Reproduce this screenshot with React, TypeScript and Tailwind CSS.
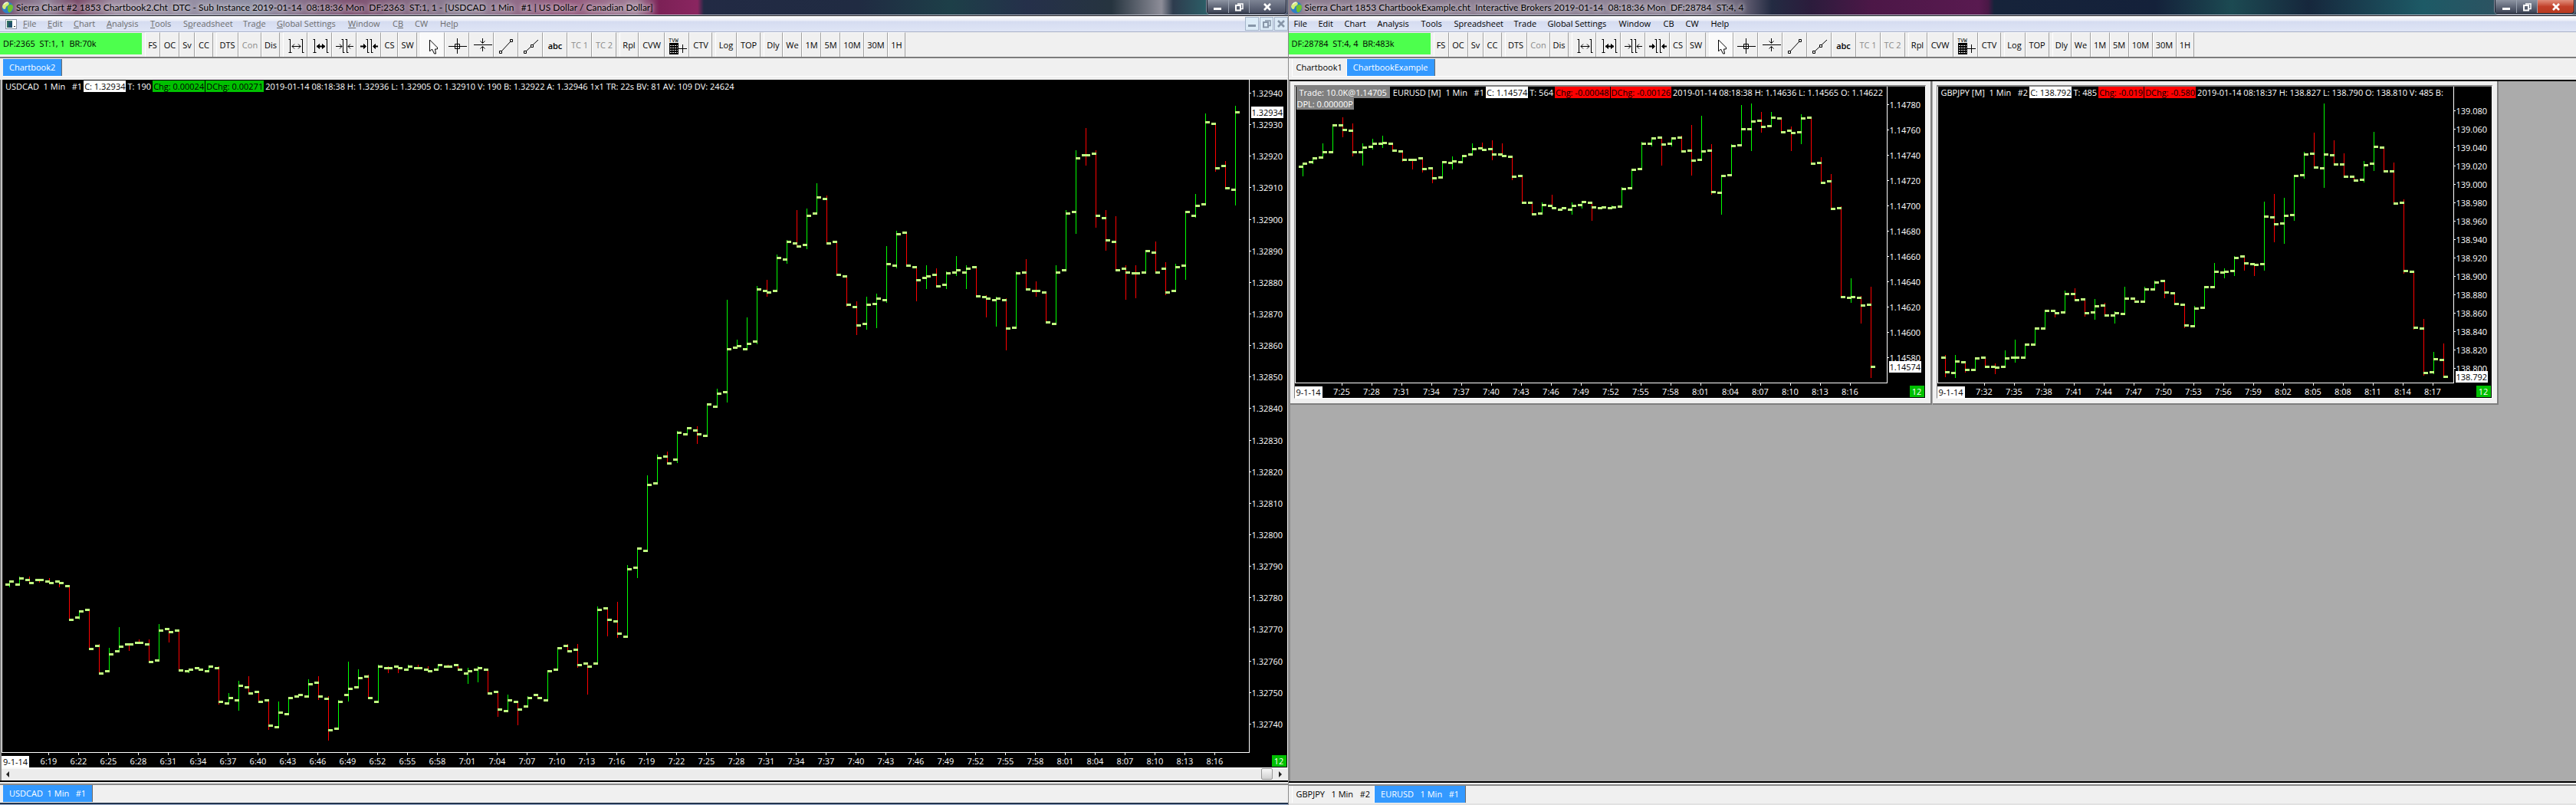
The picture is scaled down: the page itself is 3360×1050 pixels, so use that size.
import React from 'react';

// [open, close, high, low], high and low left out when the bar has no wick there
type Bar = [number, number, number?, number?];

interface Segment {
  origin: number;
  scale: number;
  bars: Bar[];
}

interface ChartProps {
  header: React.ReactNode;
  segments: Segment[];
  prices: string[];
  pricePadding: string;
  last: string;
  lastTop: number;
  times: string[];
}

const USDCAD: Segment[] = [
  {
    origin: 617,
    scale: 1 / 3,
    bars: [
      [124, 112, 112, 136], [124, 100, 94, 124], [106, 118, 94], [106, 106, 106, 116], [112, 118, 100], [112, 118, 112, 136],
      [130, 262], [253, 229, 229, 262], [223, 374], [364, 472, 358], [463, 397, 373], [385, 365, 292], [358, 358, 358, 385],
      [352, 352, 340], [358, 427, 340], [421, 304, 280], [298, 310, 298, 352], [304, 458], [463, 457, 457, 470], [451, 457],
      [463, 445], [451, 583, 445, 595], [589, 568, 550], [577, 520, 502, 618], [526, 550, 484], [544, 583], [577, 676, 577, 693],
      [682, 625, 583], [631, 568], [562, 556], [562, 514, 496], [508, 562, 484, 575], [571, 694, 562, 735], [688, 583, 577],
      [556, 532, 427, 582], [526, 490, 457], [484, 568, 478], [583, 445, 439], [451, 451, 445, 470], [445, 451, 445, 470],
      [457, 445, 439], [451, 451, 438], [457, 463, 445], [457, 439], [445, 445, 439], [439, 457], [472, 463, 451, 514],
      [457, 451, 445, 508], [457, 550], [544, 613, 544, 642], [619, 577, 556], [583, 613, 583, 675], [601, 568, 562],
      [556, 568], [577, 463], [457, 373], [364, 385, 358], [379, 439, 358, 450], [433, 445, 433, 555], [433, 223, 211],
      [217, 262, 217, 327], [268, 316, 193, 333], [328, 64, 48], [58, -17, -17, 99], [-10, -267, -302],
    ],
  },
  {
    origin: 57,
    scale: 0.3444,
    bars: [
      [1363, 1267, 1254], [1261, 1287, 1243], [1273, 1171, 1163, 1286], [1177, 1154], [1160, 1177, 1147, 1214], [1183, 1064],
      [1070, 1023, 1005], [1017, 855, 668, 1057], [849, 843, 819], [855, 832, 735], [826, 628, 616, 836], [634, 640, 592, 656],
      [634, 509, 497], [515, 448, 441, 531], [454, 466, 328], [460, 347, 322, 476], [341, 280, 226], [286, 454, 273],
      [448, 573], [579, 686, 579, 694], [695, 765, 674, 801], [759, 686, 656, 781], [681, 663, 645, 775], [669, 532, 465, 679],
      [538, 419, 407, 549], [413, 538], [544, 593, 544, 674], [585, 579, 537, 627], [573, 617, 549], [611, 567, 560, 627],
      [562, 556, 502, 578], [562, 550, 537, 628], [544, 652], [657, 663, 650, 735], [669, 663, 656, 769], [669, 776, 662, 859],
      [771, 567, 560], [562, 628, 514], [634, 634, 598, 656], [640, 753], [759, 562, 537], [556, 341, 328],
      [335, 132, 102, 418], [120, 120, 17, 160], [114, 347, 102, 395], [358, 442, 328, 482], [448, 556, 351],
      [550, 562, 537, 668], [567, 567, 537, 662], [562, 483], [489, 562, 447], [550, 640, 526, 650], [634, 544, 531],
      [538, 335, 335, 592], [347, 312, 267, 357], [306, -5, -38], [1, 167, 1, 182], [161, 245, 142], [251, -43, -68, 310],
    ],
  },
];

const EURUSD: Segment[] = [
  {
    origin: -12,
    scale: 1 / 3,
    bars: [
      [349, 335, 335, 387], [331, 316, 316, 339], [313, 290, 258], [290, 187], [187, 205, 156, 234], [208, 290, 180, 308],
      [290, 274, 258, 345], [271, 259, 240, 281], [259, 256, 228, 276], [259, 284], [287, 322, 287, 330], [320, 320, 320, 360],
      [316, 358, 316, 371], [355, 392, 355, 414], [389, 331], [334, 328, 309, 360], [331, 307], [301, 280, 258],
      [277, 281, 255, 287], [278, 301, 246, 323], [301, 307, 258], [310, 388, 310, 401], [385, 490], [488, 535],
      [532, 499, 489], [502, 511, 459], [515, 511], [515, 502, 489, 537], [499, 487, 487, 512], [490, 508, 490, 560],
      [511, 508], [511, 508, 501], [505, 436, 429], [433, 361], [358, 259, 252], [259, 238, 238, 270], [235, 262, 235, 345],
      [259, 238, 238, 269], [235, 289, 228], [286, 325, 186, 383], [322, 289, 150], [286, 448, 261, 459], [451, 385, 385, 537],
      [382, 268, 262], [265, 202, 108], [202, 172, 102, 288], [169, 193, 135, 216], [190, 157, 135], [160, 214],
      [208, 217, 192, 288], [214, 160, 144, 261], [157, 337], [334, 412, 312], [406, 514, 378], [511, 859, 504],
      [862, 859, 786, 882], [862, 892, 856, 963], [889, 1132, 819, 1175],
    ],
  },
];

const GBPJPY: Segment[] = [
  {
    origin: -12,
    scale: 1 / 3,
    bars: [
      [1096, 1153, 1087, 1173], [1156, 1111, 1087, 1176], [1114, 1144, 1114, 1155], [1144, 1099], [1096, 1132],
      [1132, 1135, 1119, 1161], [1132, 1099, 1068], [1096, 1095, 1026, 1116], [1096, 1045], [1045, 982], [982, 913],
      [913, 922, 913, 939], [919, 847, 834], [847, 871, 825], [868, 922, 868, 936], [919, 895, 867, 948], [892, 931, 882],
      [931, 922, 915, 963], [925, 865, 819], [865, 877], [877, 829, 819], [829, 802, 795], [796, 841, 796, 864], [844, 886],
      [889, 970, 889, 981], [973, 904, 894], [901, 820], [820, 760, 726], [763, 760, 747, 786], [757, 706, 699, 777],
      [700, 727, 700, 756], [730, 733, 730, 777], [730, 544, 486, 756], [547, 574, 456, 645], [571, 541, 471, 651],
      [538, 385, 385, 561], [382, 301, 291, 396], [298, 352, 216], [355, 301, 102, 432], [304, 340, 246], [340, 388, 297],
      [388, 403], [400, 343, 327, 411], [337, 271, 213, 366], [274, 367], [367, 493, 333], [490, 757, 477, 768],
      [760, 979, 760, 987], [982, 1156, 945, 1167], [1153, 1102, 1074, 1161], [1105, 1171, 1041],
    ],
  },
];

const range = (from: number, step: number, count: number, digits: number) =>
  Array.from({ length: count }, (_, i) => (from - i * step).toFixed(digits));

const timesFrom = (hour: number, minute: number, count: number) =>
  Array.from({ length: count }, (_, i) => {
    const total = hour * 60 + minute + i * 3;
    return `${Math.floor(total / 60)}:${String(total % 60).padStart(2, '0')}`;
  });

const Bars: React.FC<{ segments: Segment[] }> = ({ segments }) => {
  const bars = segments.flatMap(({ origin, scale, bars }) =>
    bars.map(([open, close, high = open, low = open]) => ({
      up: close < open,
      open: Math.round(origin + open * scale),
      close: Math.round(origin + close * scale),
      high: Math.round(origin + Math.min(open, close, high) * scale),
      low: Math.round(origin + Math.max(open, close, low) * scale),
    }))
  );
  return (
    <svg className="absolute inset-0 h-full w-full" shapeRendering="crispEdges">
      {bars.map((b, i) => (
        <rect key={i} x={9 + i * 13} y={b.high} width={1} height={Math.max(1, b.low - b.high)} fill={b.up ? '#00ff00' : '#ff0000'} />
      ))}
      {bars.map((b, i) => (
        <g key={i} fill="#c0ff80">
          <rect x={4 + i * 13} y={b.open - 1} width={6} height={3} />
          <rect x={9 + i * 13} y={b.close - 1} width={6} height={3} />
        </g>
      ))}
    </svg>
  );
};

const Chart: React.FC<ChartProps> = ({ header, segments, prices, pricePadding, last, lastTop, times }) => (
  <div className="flex min-h-0 flex-1 flex-col bg-black text-white">
    <div className="flex min-h-0 flex-1">
      <div className="relative min-w-0 flex-1 overflow-hidden border-r border-b border-l border-white">
        <Bars segments={segments} />
        {header}
      </div>
      <div className={`relative flex w-[49px] shrink-0 flex-col justify-between ${pricePadding}`}>
        {prices.map((p) => (
          <div key={p} className="flex h-[15px] items-center gap-px leading-[15px]">
            <span className="h-px w-[2px] bg-white"></span>
            {p}
          </div>
        ))}
        <div className="absolute left-[2px] bg-white px-px leading-[15px] text-black" style={{ top: lastTop }}>{last}</div>
      </div>
    </div>
    <div className="flex h-[19px] shrink-0">
      <span className="mt-1 mr-[6px] h-[15px] w-9 shrink-0 bg-white text-center leading-[15px] text-black">9-1-14</span>
      {times.map((t) => (
        <div key={t} className="flex w-[39px] shrink-0 flex-col items-center">
          <span className="h-[3px] w-px bg-white"></span>
          <span className="leading-[15px]">{t}</span>
        </div>
      ))}
      <span className="mt-[3px] mr-px ml-auto h-[15px] w-[19px] shrink-0 bg-[#00c000] text-center leading-[15px]">12</span>
    </div>
  </div>
);

interface HeaderLineProps {
  symbol: string;
  close: string;
  trades: string;
  change: string;
  dayChange: string;
  rest: string;
  down?: boolean;
}

const HeaderLine: React.FC<HeaderLineProps> = ({ symbol, close, trades, change, dayChange, rest, down }) => (
  <div className="flex h-[15px] leading-[15px] whitespace-pre">
    <span className="pr-[2px] pl-[4px]">{symbol}</span>
    <span className="bg-white px-px text-black">{close}</span>
    <span className="px-[2px]">{trades}</span>
    <span className={`mr-px px-px text-black ${down ? 'bg-[#ff0000]' : 'bg-[#00c000]'}`}>{change}</span>
    <span className={`px-px text-black ${down ? 'bg-[#ff0000]' : 'bg-[#00c000]'}`}>{dayChange}</span>
    <span className="pl-[2px]">{rest}</span>
  </div>
);

const Globe = () => (
  <svg className="h-4 w-4 shrink-0" viewBox="0 0 16 16">
    <circle cx="8" cy="8" r="7.5" fill="#2f7fc4" />
    <path d="M1 6C2 2 6 0 9 1c2 2 0 4-2 5s-1 4-3 4-3-2-3-4z" fill="#d8ec7a" />
    <path d="M9 5c3-2 6-1 6 2s-2 6-4 7-3-2-3-4-1-3 1-5z" fill="#6fc02c" />
    <path d="M3 4c1-2 3-3 5-3" stroke="#fff" strokeWidth="1.4" fill="none" opacity=".7" />
  </svg>
);

const MinIcon = ({ color }: { color: string }) => (
  <svg className="h-3 w-3" viewBox="0 0 12 12"><rect x="1" y="7" width="10" height="3" fill={color} /></svg>
);
const RestoreIcon = ({ color }: { color: string }) => (
  <svg className="h-3 w-3" viewBox="0 0 12 12" fill="none" stroke={color} strokeWidth="2">
    <path d="M4 2h7v6.500H9" strokeWidth="1.500" />
    <rect x="2" y="4" width="6" height="6.500" />
  </svg>
);
const CloseIcon = ({ color }: { color: string }) => (
  <svg className="h-3 w-3" viewBox="0 0 12 12" stroke={color} strokeWidth="2.600"><path d="M2 2l8 8M10 2l-8 8" /></svg>
);

const TitleBar: React.FC<{ title: string; active?: boolean }> = ({ title, active }) => (
  <header
    className={`flex h-[21px] shrink-0 items-start overflow-hidden border-b border-[#15161c] pl-[2px] shadow-[inset_0_-1px_0_#b9bcc8] ${
      active
        ? 'bg-[linear-gradient(90deg,#8d7c90_0,#8d8396_540px,#6a6478_590px,#232b42_630px,#2b1c3c_680px,#4c1747_760px,#591a50_900px,#4a1846_912px,#16233a_920px,#14213a_1130px,#1c4a52_1230px,#16273c_1330px,#1d5a66_1480px,#3d4b5c_1679px)]'
        : 'bg-[linear-gradient(90deg,#75506d_0,#93869c_60px,#7a4a68_100px,#9c8ba0_150px,#8f90a4_330px,#7e5070_460px,#8d8296_600px,#94587c_740px,#a08098_830px,#7c2156_860px,#8a2560_910px,#222a44_918px,#202b42_1120px,#1d3f48_1240px,#25304a_1340px,#26343f_1450px,#8d8d98_1515px,#2e3c4e_1530px,#2b6b70_1590px,#46506a_1679px)]'
    }`}
  >
    <div className="flex items-center pt-[2px]">
      <Globe />
      <h1 className="ml-[3px] font-['Lato','Open_Sans',sans-serif] text-xs leading-[16px] whitespace-pre text-black [text-shadow:0_0_8px_#fffc,0_0_5px_#fffc]">{title}</h1>
    </div>
    <div className="mr-[2px] ml-auto flex h-[18px] rounded-b border border-t-0 border-[#1c2230] shadow-[0_0_0_1px_#8a90a0]">
      <button aria-label="Minimize" className="flex w-[28px] items-center justify-center border-r border-[#9aa2b0] bg-linear-to-b from-[#8d94a2] to-[#3b4254]"><MinIcon color="#fff" /></button>
      <button aria-label="Restore" className="flex w-[27px] items-center justify-center border-r border-[#9aa2b0] bg-linear-to-b from-[#8d94a2] to-[#3b4254]"><RestoreIcon color="#fff" /></button>
      <button
        aria-label="Close"
        className={`flex w-[47px] items-center justify-center rounded-br bg-linear-to-b ${active ? 'from-[#e08e7c] via-[#c2402a] to-[#b83a20]' : 'from-[#7d8494] to-[#4a5064]'}`}
      >
        <CloseIcon color="#fff" />
      </button>
    </div>
  </header>
);

const menus = [
  { label: 'File', key: 0, width: 'w-[32px]' },
  { label: 'Edit', key: 0, width: 'w-[34px]' },
  { label: 'Chart', key: 0, width: 'w-[43px]' },
  { label: 'Analysis', key: 0, width: 'w-[57px]' },
  { label: 'Tools', key: 0, width: 'w-[43px]' },
  { label: 'Spreadsheet', key: 1, width: 'w-[78px]' },
  { label: 'Trade', key: 3, width: 'w-[44px]' },
  { label: 'Global Settings', key: 0, width: 'w-[93px]' },
  { label: 'Window', key: 0, width: 'w-[58px]' },
  { label: 'CB', key: 1, width: 'w-[29px]' },
  { label: 'CW', key: -1, width: 'w-[33px]' },
  { label: 'Help', key: 2, width: 'w-[40px]' },
];

const mdiButton = 'flex h-[18px] w-[18px] items-center justify-center border border-[#a3b4c8] bg-[#dcebf7]';

const MenuBar: React.FC<{ child?: boolean }> = ({ child }) => (
  <nav className={`flex h-[21px] shrink-0 items-center border-b border-[#a9b1c8] bg-[linear-gradient(#fff_0,#e9ecf7_30%,#d5dcf0_35%,#dfe5f6_100%)] pl-[7px] ${child ? 'text-[#6d6d6d]' : 'text-black'}`}>
    {child && (
      <svg className="mr-[8px] h-[13px] w-[15px]" viewBox="0 0 15 13">
        <rect x=".5" y=".5" width="14" height="12" fill="#fff" stroke="#8a94a4" />
        <rect x="2" y="2" width="7" height="9" fill="#2f6f62" />
        <rect x="4" y="4" width="5" height="7" fill="#22506e" />
        <path d="M11 9.500h2" stroke="#333" />
      </svg>
    )}
    {menus.map((m) => (
      <button key={m.label} className={`${m.width} text-left leading-[16px] whitespace-nowrap`}>
        {child && m.key >= 0 ? (
          <>
            {m.label.slice(0, m.key)}
            <u>{m.label[m.key]}</u>
            {m.label.slice(m.key + 1)}
          </>
        ) : (
          m.label
        )}
      </button>
    ))}
    {child && (
      <div className="ml-auto flex gap-px">
        <button aria-label="Minimize chart" className={mdiButton}><MinIcon color="#8796a8" /></button>
        <button aria-label="Restore chart" className={mdiButton}><RestoreIcon color="#8796a8" /></button>
        <button aria-label="Close chart" className={mdiButton}><CloseIcon color="#8796a8" /></button>
      </div>
    )}
  </nav>
);

const Icon: React.FC<{ children: React.ReactNode }> = ({ children }) => (
  <svg className="h-[30px] w-[30px] shrink-0" viewBox="0 0 30 30" fill="none" stroke="#000">{children}</svg>
);

const icons: Record<string, React.ReactNode> = {
  'Increase bar spacing': (
    <Icon>
      <path d="M8.500 7v18M6.500 7.500h2M6.500 24.500h4M24.500 7v18M22.500 7.500h2M24.500 24.500h2M11 16.500h11M14 13.500l-3 3 3 3M19 13.500l3 3-3 3" />
    </Icon>
  ),
  'Increase bar width': (
    <Icon>
      <path d="M8.500 7v18M6.500 7.500h2M6.500 24.500h4M24.500 7v18M22.500 7.500h2M24.500 24.500h2" />
      <path d="M11 16.500h11" strokeWidth="2" />
      <path d="M14.500 13.500v6l-3-3zM18.500 13.500v6l3-3z" fill="#000" />
    </Icon>
  ),
  'Decrease bar spacing': (
    <Icon>
      <path d="M13.500 7v18M11.500 7.500h2M13.500 24.500h2M18.500 7v18M16.500 7.500h2M18.500 24.500h2M4 16.500h8M9 13.500l3 3-3 3M20 16.500h7M23 13.500l-3 3 3 3" />
    </Icon>
  ),
  'Decrease bar width': (
    <Icon>
      <path d="M13.500 7v18M11.500 7.500h2M13.500 24.500h2M18.500 7v18M16.500 7.500h2M18.500 24.500h2" />
      <path d="M4 16.500h5M23 16.500h4" strokeWidth="2" />
      <path d="M8.500 13.500v6l3-3zM23.500 13.500v6l-3-3z" fill="#000" />
    </Icon>
  ),
  Pointer: (
    <Icon>
      <path d="M11.500 8v15l3-3 3 6h2l-1-6h3v-2z" fill="#fff" />
    </Icon>
  ),
  Crosshair: (
    <Icon>
      <path d="M15.500 6v20M4 16.500h24M12.500 13.500h6v6h-6z" />
      <path d="M15.500 6v20M4 16.500h24" />
    </Icon>
  ),
  'Horizontal line': (
    <Icon>
      <path d="M5 14.500h24" />
      <path d="M16.500 6v6M13.500 9.500l3 3 3-3M16.500 23v-6M13.500 19.500l3-3 3 3" />
    </Icon>
  ),
  Line: (
    <Icon>
      <path d="M9 23L21 10M6.500 22.500h3v3h-3zM20.500 7.500h3v3h-3z" />
    </Icon>
  ),
  Ray: (
    <Icon>
      <path d="M9 23L25 8M6.500 22.500h3v3h-3z" />
      <path d="M15.500 14.500h3v3h-3z" fill="#fff" />
    </Icon>
  ),
  'Trade volume window': (
    <Icon>
      <text x="4" y="11" fontSize="7" fontFamily="Liberation Mono" stroke="none" fill="#000">TVW</text>
      <rect x="5" y="12" width="12" height="15" fill="#000" stroke="none" />
      <path d="M6 15.500h10M6 18.500h10M6 21.500h10M6 24.500h10" stroke="#efefef" strokeDasharray="2 1" />
      <path d="M17 19.500h11M22.500 14v11" />
    </Icon>
  ),
};

interface Tool {
  label: string;
  width: string;
  look?: 'dim' | 'pressed' | 'bold';
}

const toolGroups: Tool[][] = [
  [
    { label: 'FS', width: 'w-[20px]' },
    { label: 'OC', width: 'w-[25px]' },
    { label: 'Sv', width: 'w-[20px]' },
    { label: 'CC', width: 'w-[24px]' },
  ],
  [
    { label: 'DTS', width: 'w-[29px]' },
    { label: 'Con', width: 'w-[30px]', look: 'dim' },
    { label: 'Dis', width: 'w-[24px]' },
  ],
  [
    { label: 'Increase bar spacing', width: 'w-[32px]' },
    { label: 'Increase bar width', width: 'w-[32px]' },
    { label: 'Decrease bar spacing', width: 'w-[32px]' },
    { label: 'Decrease bar width', width: 'w-[32px]' },
    { label: 'CS', width: 'w-[22px]' },
    { label: 'SW', width: 'w-[25px]' },
  ],
  [
    { label: 'Pointer', width: 'w-[32px]', look: 'pressed' },
    { label: 'Crosshair', width: 'w-[32px]' },
    { label: 'Horizontal line', width: 'w-[32px]' },
    { label: 'Line', width: 'w-[32px]' },
    { label: 'Ray', width: 'w-[32px]' },
    { label: 'abc', width: 'w-[32px]', look: 'bold' },
    { label: 'TC 1', width: 'w-[32px]', look: 'dim' },
    { label: 'TC 2', width: 'w-[32px]', look: 'dim' },
  ],
  [
    { label: 'Rpl', width: 'w-[25px]' },
    { label: 'CVW', width: 'w-[34px]' },
    { label: 'Trade volume window', width: 'w-[32px]' },
    { label: 'CTV', width: 'w-[30px]' },
  ],
  [
    { label: 'Log', width: 'w-[28px]' },
    { label: 'TOP', width: 'w-[31px]' },
  ],
  [
    { label: 'Dly', width: 'w-[25px]' },
    { label: 'We', width: 'w-[25px]' },
    { label: '1M', width: 'w-[25px]' },
    { label: '5M', width: 'w-[25px]' },
    { label: '10M', width: 'w-[31px]' },
    { label: '30M', width: 'w-[31px]' },
    { label: '1H', width: 'w-[23px]' },
  ],
];

const looks = {
  dim: 'text-[#8a8a8a]',
  pressed: 'bg-[#fafafa]',
  bold: 'pt-[2px] font-semibold',
};

const Toolbar: React.FC<{ status: string }> = ({ status }) => (
  <div className="flex h-[34px] shrink-0 border-b-2 border-[#7c7c7c] bg-[#f0f0f0]">
    <output className="mt-px mr-[4px] h-[28px] w-[185px] shrink-0 bg-[#4dff4d] pl-[4px] leading-[27px] whitespace-pre">{status}</output>
    <div className="flex gap-[4px]">
      {toolGroups.map((group, i) => (
        <div key={i} className="flex">
          {group.map((tool) => (
            <button
              key={tool.label}
              aria-label={tool.label}
              className={`flex shrink-0 items-center justify-center overflow-hidden border-t border-r border-l border-t-white border-r-[#a0a0a0] border-l-white whitespace-nowrap ${tool.width} ${tool.look ? looks[tool.look] : ''}`}
            >
              {icons[tool.label] ?? tool.label}
            </button>
          ))}
        </div>
      ))}
    </div>
  </div>
);

const Tab: React.FC<{ active?: boolean; children: string }> = ({ active, children }) => (
  <button
    className={`h-[22px] border-r leading-[20px] whitespace-pre ${
      active ? 'border-[#696969] bg-[#3399ff] px-[8px] text-white' : 'border-l border-white border-l-white bg-[#f0f0f0] px-[5px] text-black'
    }`}
  >
    {children}
  </button>
);

const TopTabs: React.FC<{ children: React.ReactNode }> = ({ children }) => (
  <div className="flex h-[28px] shrink-0 border-b-[4px] border-[#f0f0f0] bg-[#f0f0f0] pl-[4px]">
    <div className="flex flex-1 items-end border-b border-white">{children}</div>
  </div>
);

const BottomTabs: React.FC<{ children: React.ReactNode }> = ({ children }) => (
  <div className="h-[29px] shrink-0 border-t-[2px] border-black bg-[#f0f0f0] pt-[2px]">
    <div className="flex h-[24px] border-t-2 border-[#8a8a8a] pl-[4px]">{children}</div>
  </div>
);

const ChildWindow: React.FC<{ width: string; children: React.ReactNode }> = ({ width, children }) => (
  <section className={`flex h-[422px] shrink-0 flex-col border-r-2 border-b-2 border-[#7f7f7f] bg-[#f0f0f0] pt-[5px] pr-[6px] pb-[6px] pl-[5px] ${width}`}>
    <div className="flex min-h-0 flex-1 flex-col border-t-2 border-r border-b border-l border-[#808080] border-r-white border-b-white">{children}</div>
  </section>
);

const App = () => (
  <div className="flex h-screen w-full overflow-hidden bg-[#f0f0f0] font-['Open_Sans','Noto_Sans',sans-serif] text-[11px] leading-[15px]">
    <main className="flex min-w-0 flex-1 flex-col border-r border-[#8a8a8a]">
      <TitleBar title="Sierra Chart #2 1853 Chartbook2.Cht  DTC - Sub Instance 2019-01-14  08:18:36 Mon  DF:2363  ST:1, 1 - [USDCAD  1 Min   #1 | US Dollar / Canadian Dollar]" />
      <MenuBar child />
      <Toolbar status="DF:2365  ST:1, 1  BR:70k" />
      <TopTabs>
        <Tab active>Chartbook2</Tab>
      </TopTabs>
      <div className="mr-px flex min-h-0 flex-1 flex-col border-l-2 border-[#8a8a8a]">
        <Chart
          header={
            <div className="absolute top-px left-0">
              <HeaderLine
                symbol="USDCAD  1 Min   #1"
                close="C: 1.32934"
                trades="T: 190"
                change="Chg: 0.00024"
                dayChange="DChg: 0.00271"
                rest="2019-01-14 08:18:38 H: 1.32936 L: 1.32905 O: 1.32910 V: 190 B: 1.32922 A: 1.32946 1x1 TR: 22s BV: 81 AV: 109 DV: 24624"
              />
            </div>
          }
          segments={USDCAD}
          prices={range(1.3294, 0.0001, 21, 5)}
          pricePadding="pt-[10px] pb-[30px]"
          last="1.32934"
          lastTop={35}
          times={timesFrom(6, 19, 40)}
        />
        <div className="flex h-[17px] shrink-0 items-center bg-[#ececec] px-[6px] shadow-[inset_0_2px_0_#f8f8f8]">
          <button aria-label="Scroll left">
            <svg className="h-[8px] w-[5px]" viewBox="0 0 5 8"><path d="M4 0v8L0 4z" fill="#222" /></svg>
          </button>
          <button aria-label="Scroll thumb" className="mr-[8px] ml-auto h-[15px] w-[15px] rounded-xs border border-[#979797] bg-linear-to-b from-[#f8f8f8] to-[#d0d0d0]"></button>
          <button aria-label="Scroll right">
            <svg className="h-[8px] w-[5px]" viewBox="0 0 5 8"><path d="M0 0v8l4-4z" fill="#222" /></svg>
          </button>
        </div>
      </div>
      <BottomTabs>
        <Tab active>USDCAD  1 Min   #1</Tab>
      </BottomTabs>
      <div className="h-[3px] shrink-0 border-t-2 border-[#22344e] bg-[#9fb2cf]"></div>
    </main>

    <main className="flex min-w-0 flex-1 flex-col">
      <TitleBar active title="Sierra Chart 1853 ChartbookExample.cht  Interactive Brokers 2019-01-14  08:18:36 Mon  DF:28784  ST:4, 4" />
      <MenuBar />
      <Toolbar status="DF:28784  ST:4, 4  BR:483k" />
      <TopTabs>
        <Tab>Chartbook1</Tab>
        <Tab active>ChartbookExample</Tab>
      </TopTabs>
      <div className="flex min-h-0 flex-1 items-start gap-px border-t-2 border-l-2 border-t-black border-l-[#8a8a8a] bg-[#ababab]">
        <ChildWindow width="w-[837px]">
          <Chart
            header={
              <div className="absolute top-0 left-0 w-max">
                <div className="flex">
                  <div className="ml-px bg-[#808080] px-[4px] leading-[15px]">Trade: 10.0K@1.14705</div>
                  <HeaderLine
                    symbol="EURUSD [M]  1 Min   #1"
                    close="C: 1.14574"
                    trades="T: 564"
                    change="Chg: -0.00048"
                    dayChange="DChg: -0.00126"
                    rest="2019-01-14 08:18:38 H: 1.14636 L: 1.14565 O: 1.14622"
                    down
                  />
                </div>
                <div className="ml-px w-max bg-[#808080] px-px leading-[15px]">DPL: 0.00000P</div>
              </div>
            }
            segments={EURUSD}
            prices={range(1.1478, 0.0002, 11, 5)}
            pricePadding="pt-[16px] pb-[26px]"
            last="1.14574"
            lastTop={358}
            times={timesFrom(7, 25, 18)}
          />
        </ChildWindow>
        <ChildWindow width="w-[738px]">
          <Chart
            header={
              <div className="absolute top-0 left-0">
                <HeaderLine
                  symbol="GBPJPY [M]  1 Min   #2"
                  close="C: 138.792"
                  trades="T: 485"
                  change="Chg: -0.019"
                  dayChange="DChg: -0.580"
                  rest="2019-01-14 08:18:37 H: 138.827 L: 138.790 O: 138.810 V: 485 B:"
                  down
                />
              </div>
            }
            segments={GBPJPY}
            prices={range(139.08, 0.02, 15, 3)}
            pricePadding="pt-[24px] pb-[12px]"
            last="138.792"
            lastTop={371}
            times={timesFrom(7, 32, 16)}
          />
        </ChildWindow>
      </div>
      <BottomTabs>
        <Tab>GBPJPY   1 Min   #2</Tab>
        <Tab active>EURUSD   1 Min   #1</Tab>
      </BottomTabs>
      <div className="h-[2px] shrink-0 bg-[#e2e2e2]"></div>
    </main>
  </div>
);

export default App;
